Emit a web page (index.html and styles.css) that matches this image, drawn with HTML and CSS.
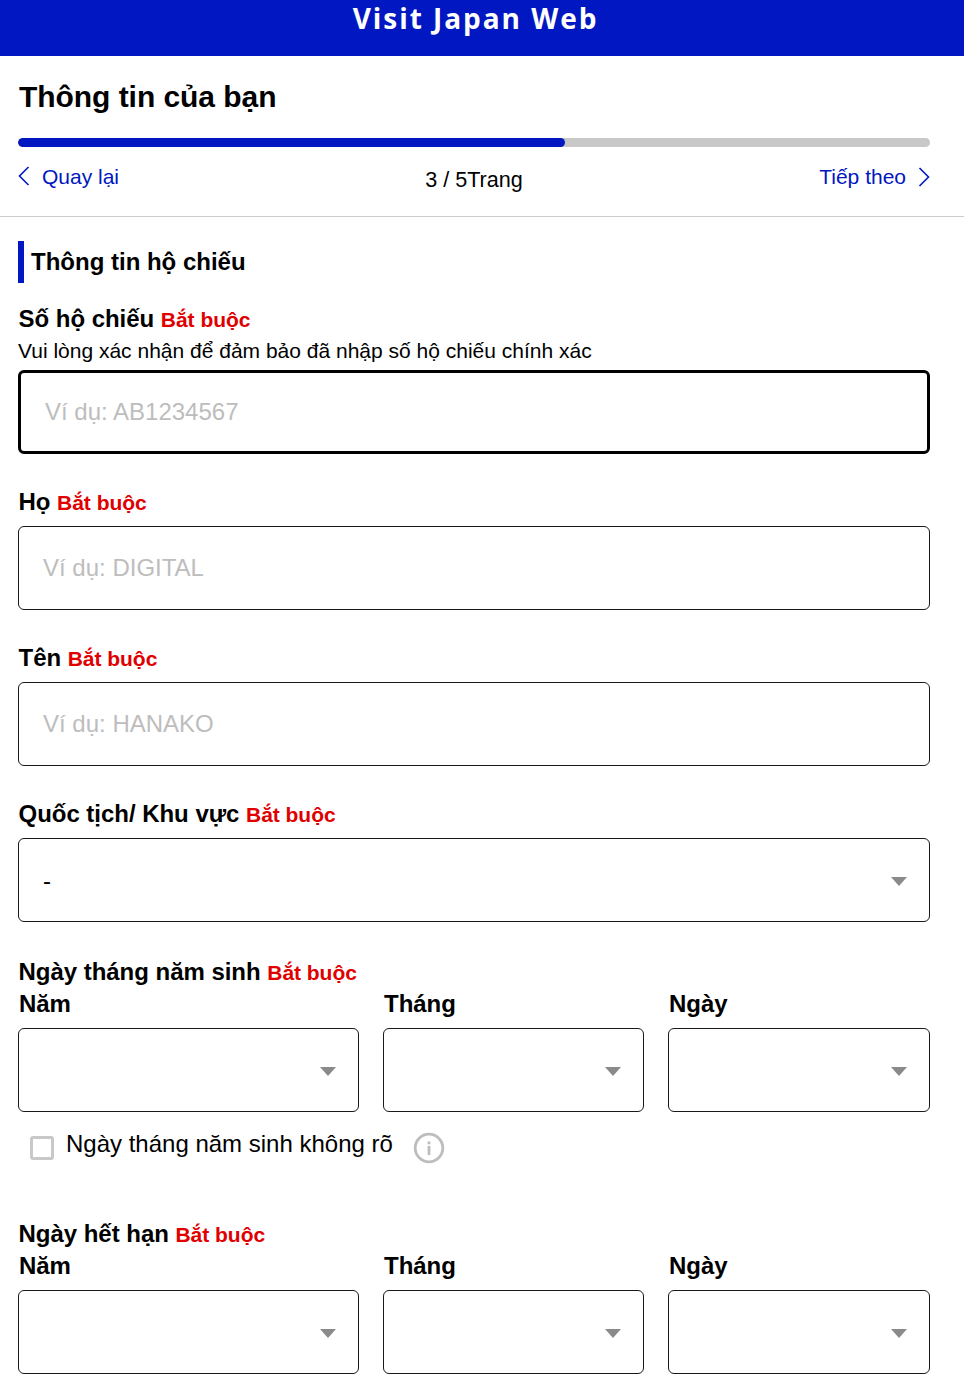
FILE: index.html
```html
<!DOCTYPE html>
<html lang="vi">
<head>
<meta charset="utf-8">
<title>Visit Japan Web</title>
<link rel="stylesheet" href="styles.css">
</head>
<body>
<header class="site-header"><span class="site-title">Visit Japan Web</span></header>
<section class="top">
  <h1 class="page-title">Thông tin của bạn</h1>
  <div class="progress"><div class="progress-fill"></div></div>
  <nav class="pager">
    <a class="pager-link pager-back">
      <svg class="chev chev-back" width="12" height="20" viewBox="0 0 12 20"><path d="M10.5 1 1.5 10l9 9" fill="none" stroke="#0017c1" stroke-width="1.6"/></svg>
      <span>Quay lại</span>
    </a>
    <span class="pager-count">3 / 5Trang</span>
    <a class="pager-link pager-next">
      <span>Tiếp theo</span>
      <svg class="chev" width="12" height="20" viewBox="0 0 12 20"><path d="M1.5 1l9 9-9 9" fill="none" stroke="#0017c1" stroke-width="1.6"/></svg>
    </a>
  </nav>
</section>
<main class="form">
  <h2 class="section-title">Thông tin hộ chiếu</h2>

  <div class="field field-passport">
    <div class="label">Số hộ chiếu <span class="req">Bắt buộc</span></div>
    <div class="hint">Vui lòng xác nhận để đảm bảo đã nhập số hộ chiếu chính xác</div>
    <div class="box box-focus"><span class="ph">Ví dụ: AB1234567</span></div>
  </div>

  <div class="field">
    <div class="label">Họ <span class="req">Bắt buộc</span></div>
    <div class="box"><span class="ph">Ví dụ: DIGITAL</span></div>
  </div>

  <div class="field">
    <div class="label">Tên <span class="req">Bắt buộc</span></div>
    <div class="box"><span class="ph">Ví dụ: HANAKO</span></div>
  </div>

  <div class="field">
    <div class="label">Quốc tịch/ Khu vực <span class="req">Bắt buộc</span></div>
    <div class="box select"><span class="val">-</span><i class="caret"></i></div>
  </div>

  <div class="field field-date">
    <div class="label">Ngày tháng năm sinh <span class="req">Bắt buộc</span></div>
    <div class="date-row">
      <div class="date-col"><div class="label sub">Năm</div><div class="box select"><i class="caret"></i></div></div>
      <div class="date-col"><div class="label sub">Tháng</div><div class="box select"><i class="caret"></i></div></div>
      <div class="date-col"><div class="label sub">Ngày</div><div class="box select"><i class="caret"></i></div></div>
    </div>
    <div class="unknown">
      <span class="check"></span>
      <span class="unknown-text">Ngày tháng năm sinh không rõ</span>
      <svg class="info" width="32" height="32" viewBox="0 0 32 32"><circle cx="16" cy="16" r="13.8" fill="none" stroke="#bdbdbd" stroke-width="2.8"/><rect x="14.6" y="14" width="2.8" height="9" fill="#bdbdbd"/><rect x="14.6" y="9.5" width="2.8" height="2.8" fill="#bdbdbd"/></svg>
    </div>
  </div>

  <div class="field field-expiry">
    <div class="label">Ngày hết hạn <span class="req">Bắt buộc</span></div>
    <div class="date-row">
      <div class="date-col"><div class="label sub">Năm</div><div class="box select"><i class="caret"></i></div></div>
      <div class="date-col"><div class="label sub">Tháng</div><div class="box select"><i class="caret"></i></div></div>
      <div class="date-col"><div class="label sub">Ngày</div><div class="box select"><i class="caret"></i></div></div>
    </div>
  </div>
</main>
</body>
</html>
```
FILE: styles.css
```css
* { box-sizing: border-box; }
html, body { margin: 0; padding: 0; }
body {
  width: 964px;
  height: 1391px;
  overflow: hidden;
  background: #fff;
  color: #000;
  font-family: "Liberation Sans", Arial, sans-serif;
}
.site-header {
  height: 56px;
  background: #0017c1;
  padding-right: 13px;
  display: flex;
  justify-content: center;
  align-items: flex-start;
}
.site-title {
  font-family: "Open Sans", sans-serif;
  font-weight: 700;
  font-size: 28px;
  line-height: 38px;
  letter-spacing: 1.95px;
  color: #fff;
  margin-top: -1px;
}
.top {
  height: 161px;
  padding: 0 34px 0 18px;
  border-bottom: 1px solid #ccc;
}
.page-title {
  margin: 0;
  padding: 23px 0 0 1px;
  font-size: 30px;
  line-height: 36px;
  font-weight: 700;
  letter-spacing: -0.05px;
}
.progress {
  height: 9px;
  margin-top: 23px;
  background: #c8c8c8;
  border-radius: 5px;
  overflow: hidden;
}
.progress-fill {
  width: 60%;
  height: 100%;
  background: #0017c1;
  border-radius: 5px;
}
.pager {
  display: grid;
  grid-template-columns: 1fr auto 1fr;
  align-items: start;
  margin-top: 18px;
  font-size: 21px;
  line-height: 24px;
}
.pager-link {
  display: flex;
  align-items: center;
  gap: 12px;
  color: #0017c1;
}
.pager-next { justify-content: flex-end; }
.pager-count {
  margin-top: 3px;
  font-size: 21.6px;
}
.chev { display: block; }
.chev-back { margin-top: -2px; }
.form {
  padding: 24px 34px 0 18px;
}
.section-title {
  margin: 0;
  height: 42px;
  padding-left: 7px;
  border-left: 6px solid #0017c1;
  font-size: 24px;
  line-height: 42px;
  font-weight: 700;
}
.field { margin-top: 33px; }
.field-passport { margin-top: 21px; }
.field-date { margin-top: 35px; }
.field-expiry { margin-top: 0; }
.label {
  height: 28px;
  font-size: 24px;
  line-height: 30px;
  font-weight: 700;
  padding-left: 0.5px;
  letter-spacing: -0.03px;
}
.sub { padding-left: 1px; }
.req {
  color: #e00000;
  font-size: 21px;
  line-height: 1;
}
.hint {
  font-size: 21px;
  line-height: 24px;
  margin-top: 7px;
  margin-bottom: 7px;
}
.box {
  height: 84px;
  border: 1px solid #1a1a1a;
  border-radius: 6px;
  padding: 0 24px;
  display: flex;
  align-items: center;
  background: #fff;
  margin-top: 11px;
  position: relative;
  font-size: 24px;
}
.hint + .box { margin-top: 0; }
.box-focus {
  border: 3px solid #000;
  padding: 0 24px;
}
.ph { color: #bdbdbd; }
.val { padding-top: 2px; }
.caret {
  position: absolute;
  right: 22px;
  top: 38px;
  width: 0;
  height: 0;
  border-left: 8px solid transparent;
  border-right: 8px solid transparent;
  border-top: 9px solid #8a8a8a;
}
.date-row {
  display: grid;
  grid-template-columns: 341px 261px 262px;
  column-gap: 24px;
  margin-top: 4px;
}
.unknown {
  display: flex;
  align-items: flex-start;
  height: 107px;
  padding: 18px 0 0 12px;
}
.check {
  width: 24px;
  height: 24px;
  margin-top: 6px;
  border: 3px solid #c8c8c8;
  border-radius: 3px;
  background: #fff;
}
.unknown-text {
  margin-left: 12px;
  font-size: 24px;
  line-height: 28px;
}
.info { margin-left: 20px; margin-top: 2px; }
```
